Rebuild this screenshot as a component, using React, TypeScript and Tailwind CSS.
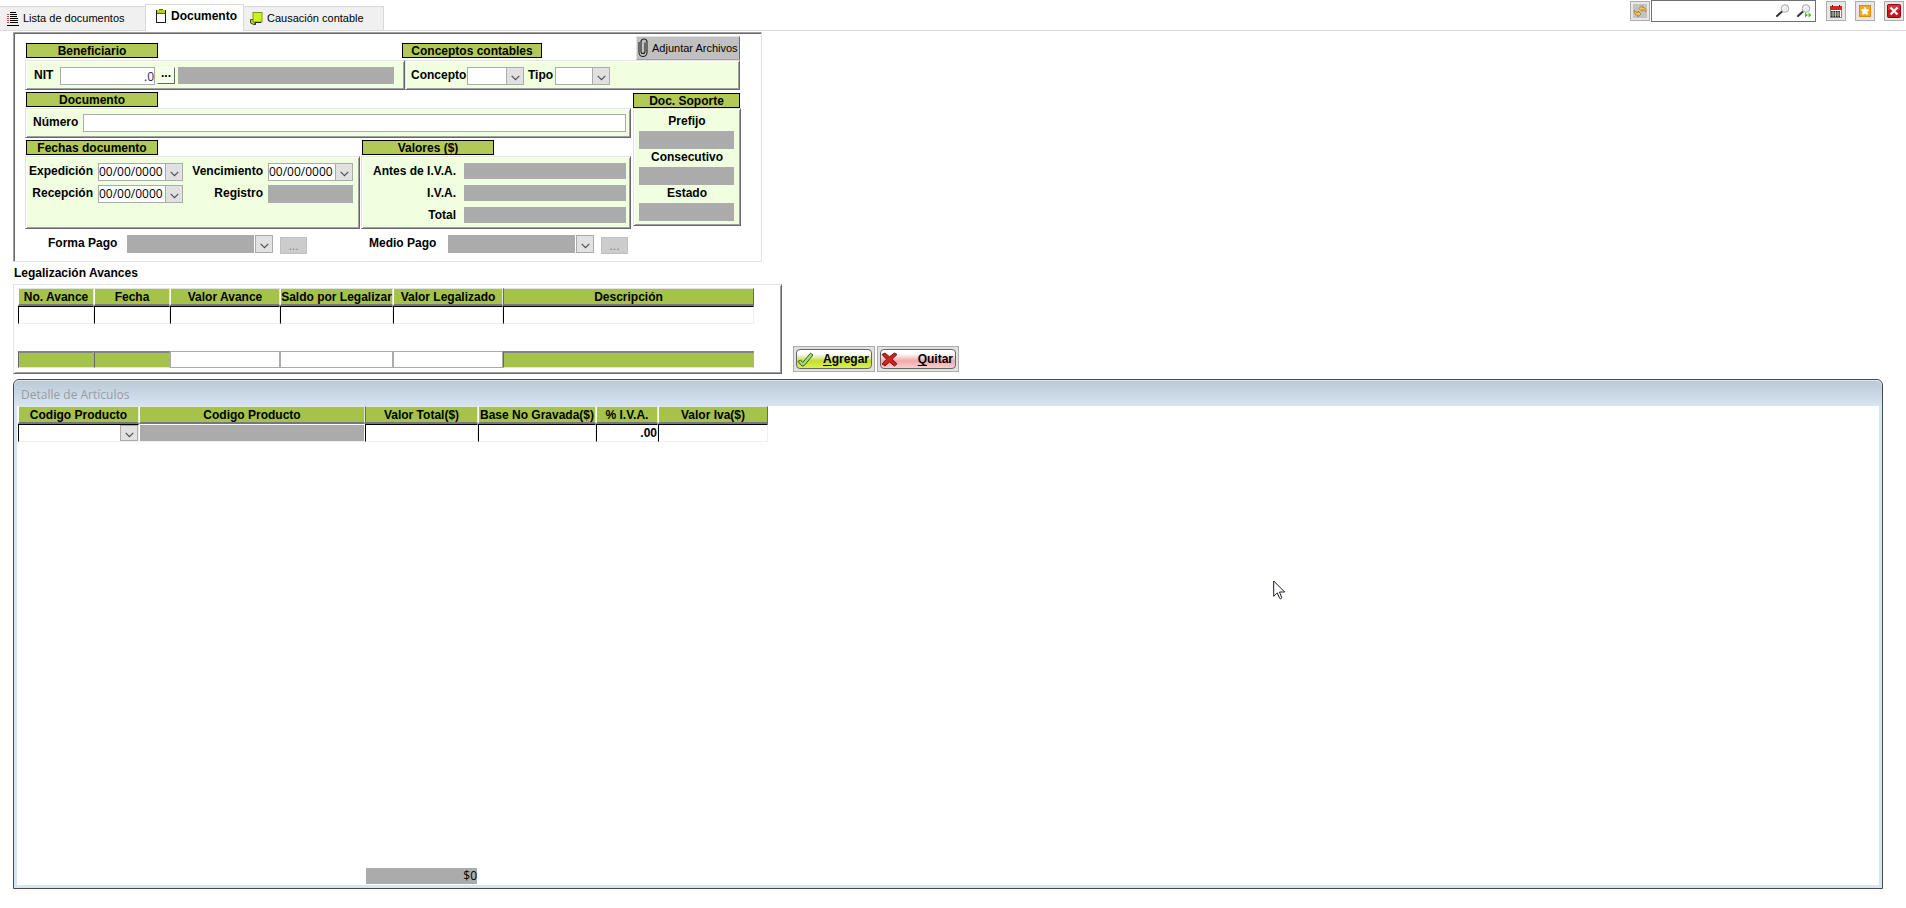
import React, { useId } from "react";
import { clsx } from "clsx";

const raised =
  "border border-t-[#e3e3e3] border-l-[#e3e3e3] border-r-[#696969] border-b-[#696969] shadow-[inset_1px_1px_0_#fff,inset_-1px_-1px_0_#a0a0a0]";

function Heading({ children, className }: { children: React.ReactNode; className?: string }) {
  return (
    <h2
      className={clsx(
        "flex h-[15px] shrink-0 items-center justify-center border border-black bg-[#b3c957] text-xs leading-none font-bold",
        className,
      )}
    >
      {children}
    </h2>
  );
}

function Chevron() {
  return (
    <svg width="9" height="6" viewBox="0 0 9 6" fill="none" stroke="#505050" strokeWidth="1.2" aria-hidden="true">
      <path d="M0.7 0.8 4.5 4.6 8.3 0.8" />
    </svg>
  );
}

function Combo({
  id,
  label,
  value = "",
  className,
  dark = false,
  flat = false,
}: {
  id?: string;
  label?: string;
  value?: string;
  className?: string;
  dark?: boolean;
  flat?: boolean;
}) {
  return (
    <span className={clsx("relative block shrink-0", flat ? "h-[16px]" : "h-[18px]", className)}>
      <select
        id={id}
        aria-label={label}
        defaultValue={value}
        className={clsx(
          "block h-full w-full appearance-none font-['Open_Sans','Noto_Sans',sans-serif] text-xs leading-4 font-normal outline-none",
          !flat && "border border-[#ababab]",
          dark ? "bg-[#ababab]" : "bg-white",
        )}
      >
        <option value={value}>{value}</option>
      </select>
      <span
        className={clsx(
          "pointer-events-none absolute right-0 top-0 flex h-full w-[18px] items-center justify-center border border-[#ababab] bg-[#e1e1e1] pt-1",
          dark && "shadow-[-1px_0_0_#fff]",
        )}
      >
        <Chevron />
      </span>
    </span>
  );
}

function Locked({ id, label, className }: { id?: string; label?: string; className?: string }) {
  return (
    <input
      id={id}
      aria-label={label}
      readOnly
      className={clsx("block shrink-0 bg-[#ababab] outline-none", className)}
    />
  );
}

function DateField({ label, labelClass }: { label: string; labelClass: string }) {
  const id = useId();
  return (
    <div className="flex">
      <label htmlFor={id} className={clsx("text-right leading-4", labelClass)}>
        {label}
      </label>
      <Combo id={id} value="00/00/0000" className="ml-[5px] w-[85px]" />
    </div>
  );
}

function AmountField({ label }: { label: string }) {
  const id = useId();
  return (
    <div className="flex h-4 items-center">
      <label htmlFor={id} className="w-[94px] text-right leading-4">
        {label}
      </label>
      <Locked id={id} label={label} className="ml-2 h-4 w-[162px]" />
    </div>
  );
}

function SupportField({ label, className }: { label: string; className?: string }) {
  const id = useId();
  return (
    <div className={className}>
      <label htmlFor={id} className="block text-center leading-4">
        {label}
      </label>
      <Locked id={id} label={label} className="mt-0.5 h-[18px] w-[95px]" />
    </div>
  );
}

function PaymentField({ label, className }: { label: string; className?: string }) {
  const id = useId();
  return (
    <div className={clsx("flex", className)}>
      <label htmlFor={id} className="w-[68px] leading-4 whitespace-nowrap">
        {label}
      </label>
      <Combo id={id} dark className="ml-[11px] w-[146px]" />
      <button
        type="button"
        aria-label={`Buscar ${label}`}
        className="mt-0.5 ml-[7px] h-[17px] w-[27px] border border-[#bfbfbf] bg-[#cccccc] text-xs leading-3 font-normal text-[#838383]"
      >
        ...
      </button>
    </div>
  );
}

function ListIcon() {
  return (
    <svg width="12" height="14" viewBox="0 0 12 14" shapeRendering="crispEdges" aria-hidden="true">
      <path d="M3 .5h6M3 2.5h7M3 4.5h7M3 6.5h8M3 8.5h8M3 10.5h8M0 13.5h12" stroke="#000" />
      <path d="M0 2.500h2M0 4.500h2M0 6.500h2M0 8.500h2M0 10.500h2" stroke="#c85040" />
    </svg>
  );
}

function ClipboardIcon() {
  return (
    <svg width="10" height="14" viewBox="0 0 10 14" aria-hidden="true">
      <rect x=".5" y="1.500" width="9" height="12" fill="#fff" stroke="#1a1a1a" />
      <rect x="1" y="1" width="8" height="3" fill="#b4d018" />
      <path d="M3 .5h4M1 4.500h8" stroke="#56660c" />
    </svg>
  );
}

function LedgerIcon() {
  return (
    <svg width="13" height="14" viewBox="0 0 13 14" aria-hidden="true">
      <path d="M.5 7.500h5v5H3.500L.5 11z" fill="#b9cf3a" stroke="#47531a" />
      <rect x="3" y=".5" width="9" height="9.500" fill="#c9f31d" stroke="#7e9a10" />
      <path d="M5 13V10.500h6" stroke="#222" fill="none" />
    </svg>
  );
}

function Magnifier({ next = false }: { next?: boolean }) {
  return (
    <svg width="15" height="14" viewBox="0 0 15 14" aria-hidden="true">
      <path d="M1 12 6 7.500" stroke="#333" strokeWidth="2" strokeLinecap="round" />
      <circle cx="9" cy="4.500" r="3.800" fill="#ececec" stroke="#aaa" />
      <path d="M7 4.500a2.200 2.200 0 0 1 2-2" stroke="#fff" fill="none" />
      {next && <path d="M8 8.500 11 11 8 13.500zM11.500 8.500 14.500 11l-3 2.500z" fill="#58b82c" />}
    </svg>
  );
}

function RefreshIcon() {
  return (
    <svg width="14" height="14" viewBox="0 0 14 14" aria-hidden="true">
      <rect width="14" height="14" fill="#c3c3c3" />
      <g fill="#f5c85a" stroke="#a8741a" strokeWidth=".8" strokeLinejoin="round">
        <path d="M6 4.500 9 1.500v1.700c3 0 4.200 2 3.800 4.800-.8-1.500-1.900-2.300-3.800-2.200v1.700z" />
        <path d="M8 10 5 13v-1.700C2 11.300.8 9 1.300 6c.8 1.700 1.700 2.600 3.700 2.500V7z" />
      </g>
    </svg>
  );
}

function CalendarIcon() {
  return (
    <svg width="12" height="13" viewBox="0 0 12 13" aria-hidden="true">
      <rect x=".5" y="1.500" width="11" height="11" fill="#fff" stroke="#888" />
      <rect y="1" width="12" height="4" fill="#d3281c" />
      <path d="M2.500 0v2M9.500 0v2" stroke="#7c120c" />
      <rect x="1" y="6" width="9" height="6" fill="#222" />
      <path d="M1 8h9M1 10h9M3 6v6M5.500 6v6M8 6v6" stroke="#fff" strokeWidth=".6" />
    </svg>
  );
}

function StarIcon() {
  return (
    <svg width="12" height="12" viewBox="0 0 12 12" aria-hidden="true">
      <rect x=".5" y=".5" width="11" height="11" fill="#ffa61a" stroke="#e08a08" />
      <path
        d="M6 2.200 7.200 4.500l2.500.4L8 6.700l.3 2.600L6 8.300 3.700 9.300 4 6.700 2.300 4.900l2.500-.4z"
        fill="#fff"
        stroke="#fff"
        strokeLinejoin="round"
      />
    </svg>
  );
}

function CloseIcon() {
  return (
    <svg width="14" height="14" viewBox="0 0 14 14" aria-hidden="true">
      <rect x=".5" y=".5" width="13" height="13" rx="1" fill="#c8141e" stroke="#8e0a10" />
      <path d="M1 1h12v5H1z" fill="#e04a50" opacity=".6" />
      <path d="m3.500 3.500 7 7M10.500 3.500l-7 7" stroke="#fff" strokeWidth="2.200" />
    </svg>
  );
}

function ClipIcon() {
  return (
    <svg width="10" height="20" viewBox="0 0 10 20" fill="none" stroke="#222" strokeWidth="1.100" aria-hidden="true">
      <path d="M1 4v10.500a4 4 0 0 0 8 0V4a3 3 0 0 0-6 0v9.500a2 2 0 0 0 4 0V4.500" />
    </svg>
  );
}

function CheckIcon() {
  return (
    <svg width="17" height="15" viewBox="0 0 17 15" aria-hidden="true">
      <path
        d="M1 9.500 3.500 8l2.300 2.500L13.500 1.200 16 3 7 13.800 5 14z"
        fill="#a9dc80"
        stroke="#3d5a22"
        strokeLinejoin="round"
      />
    </svg>
  );
}

function CrossIcon() {
  return (
    <svg width="17" height="15" viewBox="0 0 17 15" aria-hidden="true">
      <path
        d="m1 2.500 3-1.500 4.500 3.800L13.500 1 16 2.500 11 7.300l5 4.500-2.500 2.200-5-4L4 14 1 12l4.500-4.700z"
        fill="#cf2222"
        stroke="#6d1414"
        strokeLinejoin="round"
      />
    </svg>
  );
}

function Pointer() {
  return (
    <svg
      width="13"
      height="20"
      viewBox="0 0 13 20"
      className="pointer-events-none absolute left-[1273px] top-[580px]"
      aria-hidden="true"
    >
      <path
        d="M.7 1v15.300l3.600-3.400 2.300 5.400c.6 1 2.400.3 2.100-.9L6.500 12h5.200z"
        fill="#fff"
        stroke="#1c1c28"
        strokeLinejoin="round"
      />
    </svg>
  );
}

function ToolButton({ label, className, children }: { label: string; className?: string; children: React.ReactNode }) {
  return (
    <button
      type="button"
      aria-label={label}
      className={clsx(
        "flex size-5 shrink-0 items-center justify-center border border-[#adadad] bg-[#e7e7e7]",
        className,
      )}
    >
      {children}
    </button>
  );
}

function TopBar() {
  return (
    <header className="flex h-[31px] items-end border-b border-[#d9d9d9] bg-white text-[11px]">
      <nav className="-mb-px flex items-end">
        <a
          href="#lista"
          className="flex h-[25px] w-[145px] items-center border-y border-[#d9d9d9] bg-[#f0f0f0] pl-[7px] whitespace-nowrap"
        >
          <ListIcon />
          <span className="ml-1">Lista de documentos</span>
        </a>
        <a
          href="#documento"
          className="flex h-[27px] w-[99px] items-center border-x border-t border-[#d9d9d9] bg-white pb-1 pl-2.5 text-xs font-bold"
        >
          <ClipboardIcon />
          <span className="ml-[5px]">Documento</span>
        </a>
        <a
          href="#causacion"
          className="flex h-[25px] w-[140px] items-center border-y border-r border-[#d9d9d9] bg-[#f0f0f0] pl-1.5 whitespace-nowrap"
        >
          <LedgerIcon />
          <span className="ml-1">Causación contable</span>
        </a>
      </nav>
      <div className="ml-auto flex h-full items-start gap-[9px] pr-0.5">
        <div className="mr-px flex">
          <ToolButton label="Actualizar" className="mt-px mr-px">
            <RefreshIcon />
          </ToolButton>
          <div className="flex h-[22px] w-[165px] items-center border border-[#707070] bg-white pr-[3px]">
            <input aria-label="Buscar" className="min-w-0 flex-1 px-1 outline-none" />
            <button type="button" aria-label="Buscar">
              <Magnifier />
            </button>
            <button type="button" aria-label="Buscar siguiente" className="ml-1.5">
              <Magnifier next />
            </button>
          </div>
        </div>
        <ToolButton label="Calendario" className="mt-px">
          <CalendarIcon />
        </ToolButton>
        <ToolButton label="Favoritos" className="mt-px">
          <StarIcon />
        </ToolButton>
        <ToolButton label="Cerrar" className="mt-px">
          <CloseIcon />
        </ToolButton>
      </div>
    </header>
  );
}

function DocumentForm() {
  return (
    <form className="w-[749px] border border-t-[#a0a0a0] border-r-[#e3e3e3] border-b-[#e3e3e3] border-l-[#a0a0a0] pt-[3px] pb-[7px] pl-[11px] text-xs font-bold shadow-[inset_1px_1px_0_#696969]">
      <div className="flex h-6 w-[715px] items-end">
        <Heading className="mb-0.5 ml-px w-[132px]">Beneficiario</Heading>
        <Heading className="mb-0.5 ml-[244px] w-[140px]">Conceptos contables</Heading>
        <button
          type="button"
          className="ml-auto flex h-6 w-[104px] items-center border border-t-[#e3e3e3] border-l-[#e3e3e3] border-r-[#696969] border-b-[#a0a0a0] bg-[#c0c0c0] pl-px text-[11px] font-normal whitespace-nowrap"
        >
          <ClipIcon />
          <span className="ml-1">Adjuntar Archivos</span>
        </button>
      </div>
      <div className="flex h-[30px] w-[715px]">
        <div className={clsx("flex w-[380px] bg-[#efffe0] pt-1.5", raised)}>
          <label htmlFor="nit" className="ml-2 w-[26px] leading-4">
            NIT
          </label>
          <input
            id="nit"
            defaultValue=".0"
            className="h-[18px] w-[95px] border border-[#ababab] bg-white text-right font-['Open_Sans','Noto_Sans',sans-serif] text-xs font-normal text-[#1c2a66] outline-none"
          />
          <button
            type="button"
            aria-label="Buscar NIT"
            className="ml-0.5 flex h-[17px] w-[18px] items-center justify-center border border-t-white border-l-white border-r-[#696969] border-b-[#696969] bg-[#f4ffe9] pb-1.5"
          >
            ...
          </button>
          <Locked label="Nombre del beneficiario" className="ml-[3px] h-[17px] w-[216px]" />
        </div>
        <div className={clsx("flex flex-1 bg-[#efffe0] pt-1.5 font-normal", raised)}>
          <label htmlFor="concepto" className="ml-[5px] w-[56px] leading-4 font-bold">
            Concepto
          </label>
          <Combo id="concepto" className="w-[57px]" />
          <label htmlFor="tipo" className="ml-1 w-[27px] leading-4 font-bold">
            Tipo
          </label>
          <Combo id="tipo" className="w-[55px]" />
        </div>
      </div>
      <div className="flex gap-0.5">
        <div className="w-[606px] pt-0.5">
          <Heading className="ml-px w-[132px]">Documento</Heading>
          <div className={clsx("mt-px flex h-[30px] bg-[#efffe0] pt-[5px] pr-1", raised)}>
            <label htmlFor="numero" className="ml-[7px] w-[50px] leading-4">
              Número
            </label>
            <input id="numero" className="h-[18px] min-w-0 flex-1 border border-[#ababab] bg-white outline-none" />
          </div>
          <div className="mt-0.5 flex">
            <Heading className="ml-px w-[132px]">Fechas documento</Heading>
            <Heading className="ml-[204px] w-[132px]">Valores ($)</Heading>
          </div>
          <div className="mt-px flex h-[73px] gap-px font-bold">
            <div className={clsx("flex w-[335px] bg-[#efffe0] pt-1.5", raised)}>
              <div className="flex flex-col gap-1">
                <DateField label="Expedición" labelClass="w-[67px]" />
                <DateField label="Recepción" labelClass="w-[67px]" />
              </div>
              <div className="ml-2 flex flex-col gap-1">
                <DateField label="Vencimiento" labelClass="w-[72px]" />
                <div className="flex">
                  <label htmlFor="registro" className="w-[72px] text-right leading-4">
                    Registro
                  </label>
                  <Locked id="registro" className="ml-[5px] h-[18px] w-[85px]" />
                </div>
              </div>
            </div>
            <div className={clsx("flex flex-1 flex-col gap-1.5 bg-[#efffe0] pt-1.5", raised)}>
              <AmountField label="Antes de I.V.A." />
              <AmountField label="I.V.A." />
              <AmountField label="Total" />
            </div>
          </div>
        </div>
        <div className="w-[108px] pt-[3px]">
          <Heading className="w-[107px]">Doc. Soporte</Heading>
          <div className={clsx("h-[118px] bg-[#efffe0] px-[5px] pt-1", raised)}>
            <SupportField label="Prefijo" />
            <SupportField label="Consecutivo" />
            <SupportField label="Estado" />
          </div>
        </div>
      </div>
      <div className="mt-1.5 flex">
        <PaymentField label="Forma Pago" className="ml-[23px]" />
        <PaymentField label="Medio Pago" className="ml-[62px]" />
      </div>
    </form>
  );
}

type Column = { title: string; width: string };

const advanceColumns: Column[] = [
  { title: "No. Avance", width: "w-[76px]" },
  { title: "Fecha", width: "w-[76px]" },
  { title: "Valor Avance", width: "w-[110px]" },
  { title: "Saldo por Legalizar", width: "w-[113px]" },
  { title: "Valor Legalizado", width: "w-[110px]" },
  { title: "Descripción", width: "w-[251px]" },
];

const articleColumns: Column[] = [
  { title: "Codigo Producto", width: "w-[121px]" },
  { title: "Codigo Producto", width: "w-[226px]" },
  { title: "Valor Total($)", width: "w-[113px]" },
  { title: "Base No Gravada($)", width: "w-[118px]" },
  { title: "% I.V.A.", width: "w-[62px]" },
  { title: "Valor Iva($)", width: "w-[110px]" },
];

function HeaderRow({ columns, rules }: { columns: Column[]; rules: number[] }) {
  return (
    <thead>
      <tr>
        {columns.map((column, index) => (
          <th
            key={index}
            className={clsx(
              "h-[18px] border-t border-r border-b-2 border-l border-t-[#e3e3e3] border-b-[#777] bg-[#a5c34b] p-0 text-xs leading-none whitespace-nowrap",
              rules.includes(index) ? "border-l-[#696969]" : "border-l-white",
              index === columns.length - 1 ? "border-r-[#696969]" : "border-r-[#e3e3e3]",
              column.width,
            )}
          >
            <span className="flex justify-center">{column.title}</span>
          </th>
        ))}
      </tr>
    </thead>
  );
}

const cell = "border border-t-black border-l-black border-r-[#efefef] border-b-[#efefef] p-0";

function AdvancesTable() {
  return (
    <div className={clsx("w-[769px] bg-white pt-[3px] pb-[5px] pl-1", raised)}>
      <table className="w-[736px] table-fixed border-separate border-spacing-0">
        <HeaderRow columns={advanceColumns} rules={[5]} />
        <tbody>
          <tr>
            {advanceColumns.map((column) => (
              <td key={column.title} className={cell}>
                <input aria-label={column.title} className="block h-4 w-full outline-none" />
              </td>
            ))}
          </tr>
        </tbody>
        <tfoot>
          <tr>
            <td colSpan={6} className="h-[27px] p-0" />
          </tr>
          <tr>
            {advanceColumns.map((column, index) =>
              index >= 2 && index <= 4 ? (
                <td key={column.title} className="h-[17px] border border-[#ababab] p-0">
                  <input aria-label={`Total ${column.title}`} readOnly className="block h-[14px] w-full outline-none" />
                </td>
              ) : (
                <td
                  key={column.title}
                  className="h-[17px] border border-t-2 border-t-[#848484] border-l-[#696969] border-r-[#ababab] border-b-[#e3e3e3] bg-[#a5c34b] p-0"
                />
              ),
            )}
          </tr>
        </tfoot>
      </table>
    </div>
  );
}

function ActionButton({
  tone,
  letter,
  rest,
  icon,
}: {
  tone: string;
  letter: string;
  rest: string;
  icon: React.ReactNode;
}) {
  return (
    <button type="button" className="flex h-[26px] w-[82px] border border-[#ababab] bg-[#e1e1e1] p-0.5">
      <span
        className={clsx(
          "flex h-5 w-full items-center justify-between rounded-sm border border-[#666] bg-linear-to-b pr-0.5 text-xs leading-none font-bold",
          tone,
        )}
      >
        {icon}
        <span>
          <span className="underline underline-offset-2">{letter}</span>
          {rest}
        </span>
      </span>
    </button>
  );
}

function ArticlesPanel() {
  return (
    <section className="mt-[5px] mr-[23px] mb-[19px] ml-[13px] flex min-h-[300px] flex-1 flex-col rounded-t-md border border-[#454a50] bg-[#d7e4f1] px-[3px] pb-[3px]">
      <h2 className="-mx-[3px] h-[26px] shrink-0 rounded-t-md border-t border-[#dfe8f0] bg-linear-to-b from-[#bccad8] to-[#d7e4f1] pt-1 pl-[7px] font-['Open_Sans','Noto_Sans',sans-serif] text-xs leading-5 text-[#989ca1]">
        Detalle de Artículos
      </h2>
      <div className="flex flex-1 flex-col bg-white pb-px pl-px">
        <table className="w-[750px] table-fixed border-separate border-spacing-0">
          <HeaderRow columns={articleColumns} rules={[2]} />
          <tbody>
            <tr>
              <td className={cell}>
                <Combo label="Codigo Producto" flat className="w-full" />
              </td>
              <td className="border border-white border-b-[#efefef] p-0">
                <Locked label="Descripción del producto" className="h-4 w-full" />
              </td>
              <td className={cell}>
                <input aria-label="Valor Total" className="block h-4 w-full outline-none" />
              </td>
              <td className={cell}>
                <input aria-label="Base No Gravada" className="block h-4 w-full outline-none" />
              </td>
              <td className={cell}>
                <input
                  aria-label="Porcentaje I.V.A."
                  defaultValue=".00"
                  className="block h-4 w-full text-right text-xs font-bold outline-none"
                />
              </td>
              <td className={cell}>
                <input aria-label="Valor Iva" className="block h-4 w-full outline-none" />
              </td>
            </tr>
          </tbody>
        </table>
        <input
          aria-label="Total artículos"
          readOnly
          value="$0"
          className="mt-auto ml-[348px] block h-4 w-[111px] bg-[#ababab] text-right font-['Open_Sans','Noto_Sans',sans-serif] text-xs outline-none"
        />
      </div>
    </section>
  );
}

export default function App() {
  return (
    <div className="relative flex min-h-screen flex-col bg-white font-['Liberation_Sans',Arial,sans-serif] text-black">
      <TopBar />
      <main className="flex flex-1 flex-col">
        <div className="pt-px pl-[13px]">
          <DocumentForm />
          <h2 className="mt-[3px] ml-px text-xs leading-4 font-bold">Legalización Avances</h2>
          <div className="mt-[3px] flex items-end gap-0.5">
            <AdvancesTable />
            <div className="mb-0.5 ml-[9px] flex gap-0.5">
              <ActionButton
                tone="from-white from-20% via-[#c3dc2c] via-60% to-[#dcf24a]"
                letter="A"
                rest="gregar"
                icon={<CheckIcon />}
              />
              <ActionButton
                tone="from-white from-20% via-[#f0a8a8] via-60% to-[#f8d0d0]"
                letter="Q"
                rest="uitar"
                icon={<CrossIcon />}
              />
            </div>
          </div>
        </div>
        <ArticlesPanel />
      </main>
      <Pointer />
    </div>
  );
}
